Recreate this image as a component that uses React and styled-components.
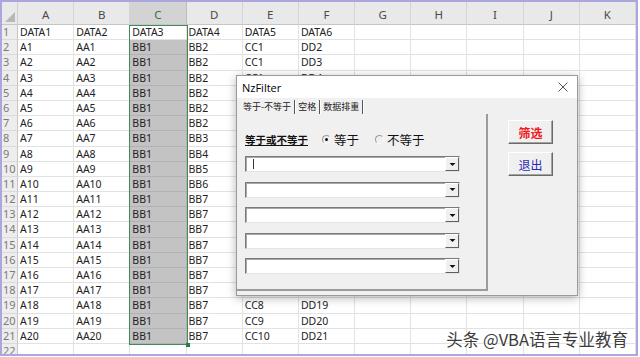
import React from 'react';
import styled, { createGlobalStyle } from 'styled-components';

const GlobalStyle = createGlobalStyle`
  html, body {
    margin: 0;
    padding: 0;
    background: #fff;
  }
  body {
    font-family: 'Noto Sans', 'Noto Sans CJK SC', sans-serif;
  }
`;

const COLUMNS = ['A', 'B', 'C', 'D', 'E', 'F', 'G', 'H', 'I', 'J', 'K'];
const SELECTED_COL = 2;

const buildRows = () => {
  const rows = [['DATA1', 'DATA2', 'DATA3', 'DATA4', 'DATA5', 'DATA6']];
  for (let i = 1; i <= 20; i++) {
    let d = 'BB7';
    if (i <= 6) d = 'BB2';
    else if (i <= 10) d = 'BB' + (i - 4);
    const e = 'CC' + Math.max(1, i - 10);
    rows.push(['A' + i, 'AA' + i, 'BB1', d, e, 'DD' + (i + 1)]);
  }
  rows.push([]);
  return rows;
};

const Frame = styled.div`
  position: relative;
  width: 638px;
  height: 356px;
  box-sizing: border-box;
  border: 2px solid #aaa6df;
  overflow: hidden;
`;

const Sheet = styled.div`
  display: grid;
  grid-template-columns: 16px repeat(11, 1fr);
  grid-template-rows: 23px repeat(22, 15.2px);
`;

// every sheet part sits at an explicit grid spot so the selection frame can overlap it
const Slot = styled.div`
  grid-row: ${({ $row }) => $row};
  grid-column: ${({ $col }) => $col};
  box-sizing: border-box;
`;

const Corner = styled(Slot)`
  position: relative;
  background: #e9e9e9;
  border-right: 1px solid #cfcfcf;
  border-bottom: 1px solid #c6c6c6;

  &::after {
    content: '';
    position: absolute;
    right: 2px;
    bottom: 2px;
    border-style: solid;
    border-width: 0 0 10px 10px;
    border-color: transparent transparent #b8b8b8 transparent;
  }
`;

const ColHead = styled(Slot)`
  display: flex;
  align-items: center;
  justify-content: center;
  background: ${({ $selected }) => ($selected ? '#d3d3d3' : '#e9e9e9')};
  border-right: 1px solid ${({ $selected }) => ($selected ? '#bdbdbd' : '#d5d5d5')};
  border-bottom: 1px solid #c6c6c6;
  color: ${({ $selected }) => ($selected ? '#2b6e47' : '#4a4a4a')};
  font-size: 11.5px;
  padding-top: 2px;
`;

const RowHead = styled(Slot)`
  background: #ededed;
  border-right: 1px solid #c6c6c6;
  border-bottom: 1px solid #dadada;
  color: #7a7a7a;
  font-size: 11px;
  line-height: 14px;
  padding-left: 1px;
  overflow: hidden;
  white-space: nowrap;
`;

const Cell = styled(Slot)`
  background: ${({ $selected }) => ($selected ? '#c3c3c3' : '#fff')};
  border-right: 1px solid ${({ $selected }) => ($selected ? '#b2b2b2' : '#e2e2e2')};
  border-bottom: 1px solid ${({ $selected }) => ($selected ? '#b2b2b2' : '#e2e2e2')};
  color: #222;
  font-size: 10.5px;
  line-height: 14px;
  padding-left: 2px;
  white-space: nowrap;
  overflow: hidden;
`;

const SelectionBox = styled.div`
  grid-column: ${SELECTED_COL + 2};
  grid-row: 2 / 23;
  position: relative;
  z-index: 1;
  margin: 0 -1px -1px -1px;
  border: 1.5px solid #3f8b5c;
  pointer-events: none;

  &::after {
    content: '';
    position: absolute;
    right: -3px;
    bottom: -3px;
    width: 4px;
    height: 4px;
    background: #2f7a4b;
  }
`;

const Dialog = styled.div`
  position: absolute;
  left: 234px;
  top: 73px;
  z-index: 3;
  width: 342px;
  height: 221px;
  box-sizing: border-box;
  display: flex;
  flex-direction: column;
  background: #f0f0f0;
  border: 1px solid #9a9a9a;
  box-shadow: 0 2px 9px rgba(0, 0, 0, 0.3);
`;

const TitleBar = styled.div`
  height: 22px;
  flex: none;
  display: flex;
  align-items: center;
  justify-content: space-between;
  padding: 0 9px 0 5px;
  background: #fff;
`;

const Title = styled.span`
  font-family: 'Open Sans', 'Noto Sans', sans-serif;
  font-size: 11px;
  color: #000;
`;

const DialogBody = styled.div`
  flex: 1;
  display: flex;
  padding-bottom: 4px;
`;

const MultiPage = styled.div`
  width: 251px;
  display: flex;
  flex-direction: column;
`;

const TabStrip = styled.div`
  height: 16px;
  display: flex;
  align-items: flex-end;
  padding-left: 4px;
`;

const Tab = styled.span`
  height: 14px;
  padding: 0 3px 0 2px;
  font-family: 'Noto Sans CJK SC', sans-serif;
  font-size: 9px;
  line-height: 13px;
  color: #222;
  border-right: 1px solid #555;
  box-shadow: 1px 0 0 #fff;
  margin-right: 1px;
`;

const Panel = styled.div`
  flex: 1;
  box-sizing: border-box;
  padding: 18px 0 0 8px;
  border-right: 2px solid #9b9b9b;
  border-bottom: 2px solid #9b9b9b;
  display: flex;
  flex-direction: column;
  gap: 9.5px;
`;

const OptionRow = styled.div`
  height: 14px;
  display: flex;
  align-items: center;
  margin-bottom: 0.5px;
  font-family: 'Noto Sans CJK SC', sans-serif;
  color: #111;
`;

const FieldLabel = styled.span`
  font-size: 10.5px;
  font-weight: bold;
  text-decoration: underline;
  margin-right: 14px;
`;

const Radio = styled.span`
  display: flex;
  align-items: center;
  gap: 3px;
  font-size: 12.5px;
  margin-right: 16px;
`;

const RadioMark = styled.span`
  width: 7px;
  height: 7px;
  border-radius: 50%;
  border: 1px solid;
  border-color: #9a9a9a #f8f8f8 #f8f8f8 #9a9a9a;
  display: flex;
  align-items: center;
  justify-content: center;

  &::after {
    content: '';
    width: 3px;
    height: 3px;
    border-radius: 50%;
    background: ${({ $checked }) => ($checked ? '#111' : 'transparent')};
  }
`;

const Combo = styled.div`
  width: 215px;
  height: 16px;
  box-sizing: border-box;
  display: flex;
  background: #fff;
  border: 1px solid;
  border-color: #7a7a7a #e4e4e4 #e4e4e4 #7a7a7a;
  box-shadow: inset 1px 1px 0 #a8a8a8;
`;

const ComboText = styled.div`
  flex: 1;
  padding: 2px 0 0 7px;

  &::before {
    content: '';
    display: ${({ $caret }) => ($caret ? 'block' : 'none')};
    width: 1px;
    height: 10px;
    background: #333;
  }
`;

const DropButton = styled.div`
  width: 14px;
  box-sizing: border-box;
  display: flex;
  align-items: center;
  justify-content: center;
  background: #f0f0f0;
  border: 1px solid;
  border-color: #fff #5f5f5f #5f5f5f #fff;
`;

const SideColumn = styled.div`
  flex: 1;
  display: flex;
  flex-direction: column;
  gap: 8px;
  padding: 22px 0 0 20px;
`;

const CommandButton = styled.div`
  width: 45px;
  height: 24px;
  box-sizing: border-box;
  display: flex;
  align-items: center;
  justify-content: center;
  background: #f0f0f0;
  border: 1px solid;
  border-color: #fff #6a6a6a #6a6a6a #fff;
  box-shadow: inset -1px -1px 0 #a3a3a3;
  font-family: 'Noto Sans CJK SC', sans-serif;
  font-size: 12px;
  font-weight: ${({ $bold }) => ($bold ? 'bold' : 'normal')};
  color: ${({ $color }) => $color};
`;

const Watermark = styled.div`
  position: absolute;
  right: 8px;
  bottom: 5px;
  z-index: 4;
  font-family: 'Noto Sans CJK SC', sans-serif;
  font-size: 16.5px;
  line-height: 20px;
  color: #3c3c3c;
  text-shadow: 0 0 2px #fff, 0 0 2px #fff;
`;

const Arrow = () => (
  <svg width="7" height="5" viewBox="0 0 7 5">
    <path d="M0.5 1h6L3.5 4z" fill="#111" />
  </svg>
);

const ComboBox = ({ caret }) => (
  <Combo>
    <ComboText $caret={caret} />
    <DropButton>
      <Arrow />
    </DropButton>
  </Combo>
);

const CloseIcon = () => (
  <svg width="10" height="10" viewBox="0 0 10 10">
    <path d="M0.5 0.5l9 9M9.5 0.5l-9 9" stroke="#555" strokeWidth="1" />
  </svg>
);

const FilterDialog = () => (
  <Dialog>
    <TitleBar>
      <Title>NzFilter</Title>
      <CloseIcon />
    </TitleBar>
    <DialogBody>
      <MultiPage>
        <TabStrip>
          <Tab>等于-不等于</Tab>
          <Tab>空格</Tab>
          <Tab>数据排重</Tab>
        </TabStrip>
        <Panel>
          <OptionRow>
            <FieldLabel>等于或不等于</FieldLabel>
            <Radio>
              <RadioMark $checked />
              等于
            </Radio>
            <Radio>
              <RadioMark />
              不等于
            </Radio>
          </OptionRow>
          <ComboBox caret />
          <ComboBox />
          <ComboBox />
          <ComboBox />
          <ComboBox />
        </Panel>
      </MultiPage>
      <SideColumn>
        <CommandButton $color="#f01818" $bold>
          筛选
        </CommandButton>
        <CommandButton $color="#2a2ab0">退出</CommandButton>
      </SideColumn>
    </DialogBody>
  </Dialog>
);

const App = () => {
  const rows = buildRows();

  return (
    <Frame>
      <GlobalStyle />
      <Sheet>
        <Corner $row={1} $col={1} />
        {COLUMNS.map((c, i) => (
          <ColHead key={c} $row={1} $col={i + 2} $selected={i === SELECTED_COL}>
            {c}
          </ColHead>
        ))}
        {rows.map((row, r) => (
          <React.Fragment key={r}>
            <RowHead $row={r + 2} $col={1}>
              {r + 1}
            </RowHead>
            {COLUMNS.map((c, i) => (
              <Cell
                key={c}
                $row={r + 2}
                $col={i + 2}
                $selected={i === SELECTED_COL && r > 0 && r < 21}
              >
                {row[i] || ''}
              </Cell>
            ))}
          </React.Fragment>
        ))}
        <SelectionBox />
      </Sheet>
      <FilterDialog />
      <Watermark>头条 @VBA语言专业教育</Watermark>
    </Frame>
  );
};

export default App;
